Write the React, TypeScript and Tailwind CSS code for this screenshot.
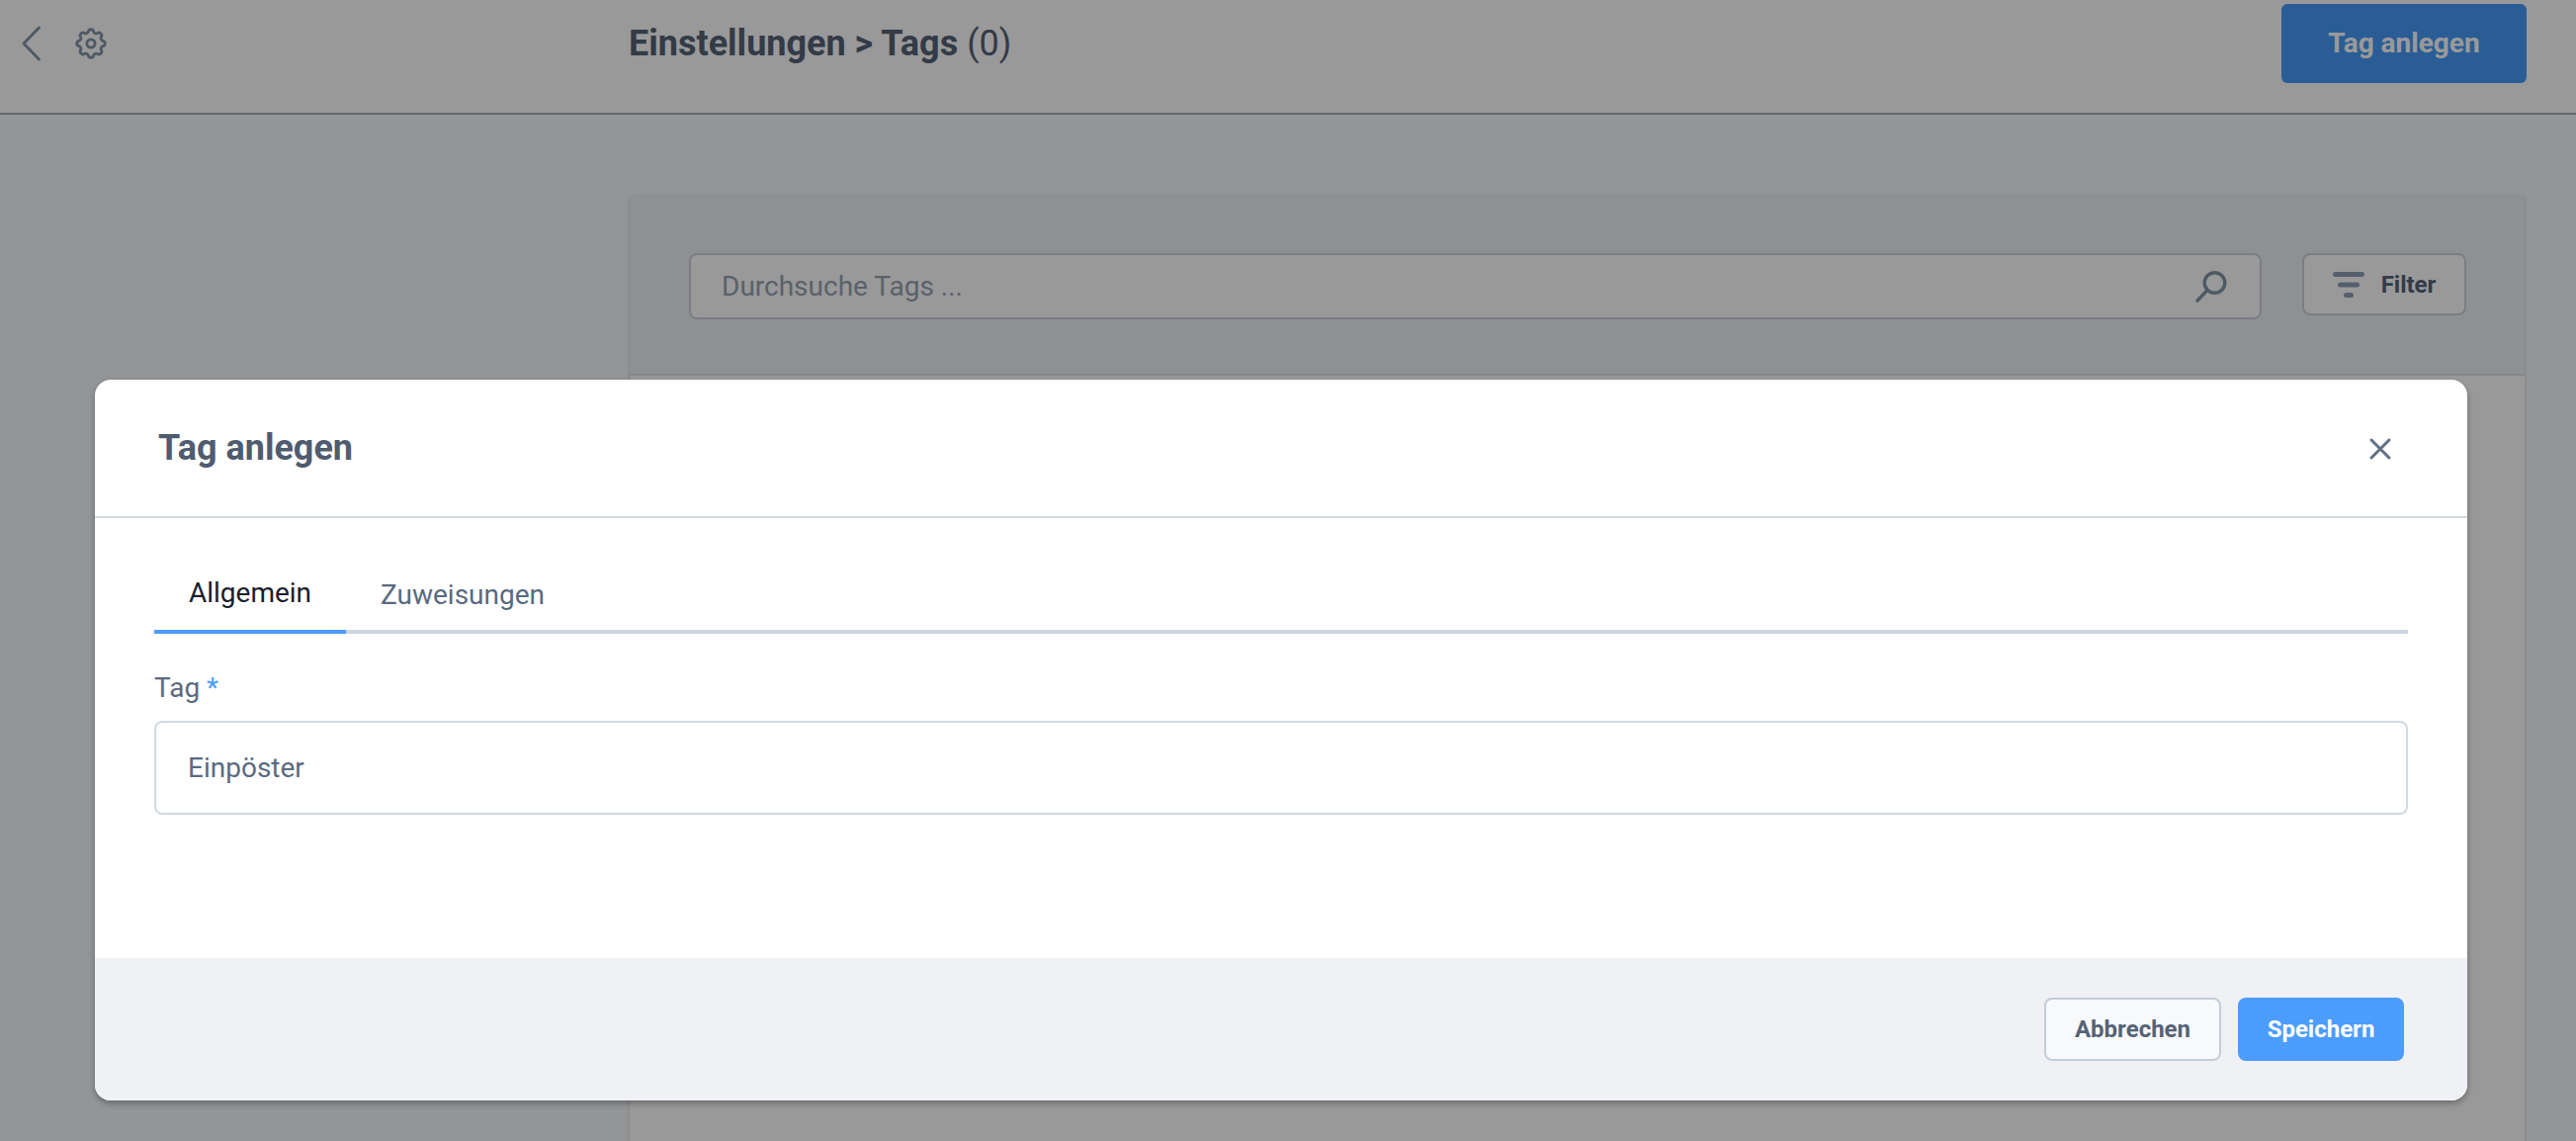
import React from "react";

export default function App() {
  return (
    <div className="relative h-[1154px] w-[2606px] overflow-hidden bg-[#f7f9fa] font-['Roboto',sans-serif]">
      <header className="flex h-[116px] items-start border-b-2 border-[#a3aeb9] bg-white pr-[50px]">
        <div className="flex h-[88px] w-[635px] shrink-0 items-center pl-[20px]">
          <svg width="24" height="36" viewBox="0 0 24 36" fill="none" stroke="#8494a8" strokeWidth="2.8" strokeLinecap="round" strokeLinejoin="round">
            <path d="M19.5 2 L4 18 L19.5 34" />
          </svg>
          <svg className="ml-[29px]" width="38" height="38" viewBox="0 0 24 24" fill="none" stroke="#8494a8" strokeWidth="1.8" strokeLinecap="round" strokeLinejoin="round">
            <path d="M10.325 4.317c.426-1.756 2.924-1.756 3.35 0a1.724 1.724 0 002.573 1.066c1.543-.94 3.31.826 2.37 2.37a1.724 1.724 0 001.065 2.572c1.756.426 1.756 2.924 0 3.35a1.724 1.724 0 00-1.066 2.573c.94 1.543-.826 3.31-2.37 2.37a1.724 1.724 0 00-2.572 1.065c-.426 1.756-2.924 1.756-3.35 0a1.724 1.724 0 00-2.573-1.066c-1.543.94-3.31-.826-2.37-2.37a1.724 1.724 0 00-1.065-2.572c-1.756-.426-1.756-2.924 0-3.35a1.724 1.724 0 001.066-2.573c-.94-1.543.826-3.31 2.37-2.37.996.608 2.296.07 2.572-1.065z" />
            <circle cx="12" cy="12" r="2.6" />
          </svg>
        </div>
        <h1 className="flex h-[88px] flex-1 items-center pl-[1px] text-[36px] font-bold text-[#566377]">
          Einstellungen &gt; Tags<span className="ml-[9px] font-normal">(0)</span>
        </h1>
        <button className="mt-[4px] h-[80px] w-[248px] rounded-[6px] bg-[#469bfa] text-[28px] font-bold text-white">Tag anlegen</button>
      </header>

      <main className="pl-[635px] pr-[50px] pt-[80px]">
        <section className="h-[1000px] rounded-t-[6px] border-l-2 border-r-2 border-[#e8eaec] bg-white">
          <div className="flex h-[184px] items-start rounded-t-[6px] border-b-2 border-[#dde1e6] bg-[#eff1f2] pl-[60px] pr-[59px] pt-[60px]">
            <div className="flex h-[67px] flex-1 items-center justify-between rounded-[8px] border-2 border-[#cbd2da] bg-white pl-[31px] pr-[32px]">
              <span className="text-[28px] text-[#96a2b3]">Durchsuche Tags ...</span>
              <svg width="34" height="34" viewBox="0 0 34 34" fill="none" stroke="#8494a8" strokeWidth="3.4" strokeLinecap="round">
                <circle cx="20.5" cy="13" r="10.3" />
                <path d="M13 20.5 L3 31" />
              </svg>
            </div>
            <button className="ml-[41px] flex h-[63px] w-[166px] items-center justify-center rounded-[8px] border-2 border-[#cbd2da] bg-white text-[24px] font-bold text-[#566377]">
              <svg className="mr-[17px]" width="32" height="26" viewBox="0 0 32 26" fill="#8f9fb5">
                <rect x="0" y="0" width="32" height="5" rx="2.5" />
                <rect x="5" y="10.5" width="22" height="5" rx="2.5" />
                <rect x="11" y="21" width="10" height="5" rx="2.5" />
              </svg>
              Filter
            </button>
          </div>
        </section>
      </main>

      <div className="absolute inset-0 bg-black/40" />

      <div className="absolute left-[96px] top-[384px] flex h-[729px] w-[2400px] flex-col overflow-hidden rounded-[16px] bg-white shadow-[0_3px_6px_rgba(0,0,0,0.3)]">
        <div className="flex h-[140px] items-center justify-between border-b-2 border-[#d5dae1] pl-[64px] pr-[76px]">
          <h2 className="text-[36px] font-bold text-[#4f5c70]">Tag anlegen</h2>
          <svg className="mt-[2px]" width="24" height="24" viewBox="0 0 24 24" fill="none" stroke="#5f7086" strokeWidth="3" strokeLinecap="round">
            <path d="M3 3 L21 21 M21 3 L3 21" />
          </svg>
        </div>
        <div className="flex-1 pl-[60px] pr-[60px]">
          <div className="mt-[49px] flex h-[68px] border-b-4 border-[#cfd6e0]">
            <div className="-mb-[4px] flex h-[68px] w-[194px] items-center justify-center border-b-4 border-[#4c9cfb] pb-[10px] text-[28px] text-[#1a202c]">Allgemein</div>
            <div className="flex h-[64px] items-center pb-[6px] pl-[35px] text-[28px] text-[#5a6a80]">Zuweisungen</div>
          </div>
          <label className="mt-[39px] block h-[32px] text-[28px] leading-[32px] text-[#5a6a80]">
            Tag <span className="text-[#4c9cfb]">*</span>
          </label>
          <div className="mt-[17px] flex h-[95px] items-center rounded-[8px] border-2 border-[#d3d9e0] pl-[32px] text-[28px] text-[#5a6a80]">Einpöster</div>
        </div>
        <div className="flex h-[144px] items-start justify-end gap-[17px] bg-[#eff1f5] pr-[64px] pt-[40px]">
          <button className="h-[64px] w-[179px] rounded-[8px] border-2 border-[#c3cdd9] bg-[#f7f9fa] text-[24px] font-bold text-[#566377]">Abbrechen</button>
          <button className="h-[64px] w-[168px] rounded-[8px] bg-[#4c9cfb] text-[24px] font-bold text-white">Speichern</button>
        </div>
      </div>
    </div>
  );
}
